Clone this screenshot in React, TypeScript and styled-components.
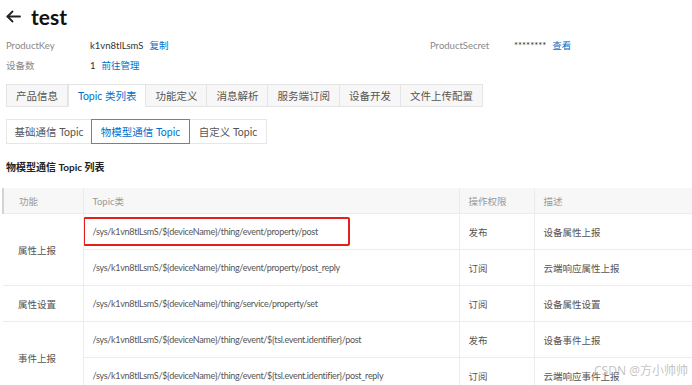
import styled, { createGlobalStyle } from "styled-components";

const Global = createGlobalStyle`
  html, body {
    margin: 0;
    padding: 0;
    background: #ffffff;
    overflow: hidden;
  }
  body {
    font-family: Lato, "Noto Sans CJK SC", sans-serif;
    color: #333;
  }
`

const Page = styled.div`
  position: relative;
  width: 692px;
  height: 385px;
  overflow: hidden;
  padding-left: 6px;
  box-sizing: border-box;
`

const Header = styled.div`
  display: flex;
  align-items: center;
  gap: 10px;
  height: 32px;
  svg {
    display: block;
    margin-top: 1px;
  }
  .name {
    font-size: 21px;
    font-weight: 700;
    color: #111;
  }
`

const Info = styled.div`
  display: grid;
  grid-template-columns: 84px 340px 84px auto;
  row-gap: 6px;
  margin-top: 7px;
  font-size: 9.5px;
  line-height: 14px;
  .lbl {
    color: #888;
  }
  .val {
    color: #333;
  }
  a {
    color: #0070cc;
    margin-left: 6px;
    text-decoration: none;
  }
`

const TabBar = styled.div`
  display: flex;
  margin-top: 11px;
  height: 23px;
`

const Tab = styled.div<{ $active?: boolean }>`
  display: flex;
  align-items: center;
  padding: 0 9px;
  font-size: 10.5px;
  color: ${p => (p.$active ? "#0070cc" : "#555")};
  background: ${p => (p.$active ? "#fff" : "#f7f7f7")};
  border: 1px solid #e4e4e4;
  border-left: ${p => (p.$active ? "1px solid #e4e4e4" : "none")};
  border-bottom: ${p => (p.$active ? "1px solid #fff" : "1px solid #e4e4e4")};
  &:first-child {
    border-left: 1px solid #e4e4e4;
  }
`

const SubBar = styled.div`
  display: flex;
  margin-top: 12px;
  height: 25px;
`

const SubTab = styled.div<{ $active?: boolean; $w: number }>`
  display: flex;
  align-items: center;
  justify-content: center;
  width: ${p => p.$w}px;
  box-sizing: border-box;
  font-size: 10.5px;
  color: ${p => (p.$active ? "#0070cc" : "#555")};
  background: #fff;
  border: 1px solid ${p => (p.$active ? "#3d8fd8" : "#e6e6e6")};
  margin-left: -1px;
  position: relative;
  z-index: ${p => (p.$active ? 1 : 0)};
  &:first-child {
    margin-left: 0;
  }
`

const Title = styled.div`
  margin-top: 16px;
  font-size: 10px;
  font-weight: 700;
  color: #222;
  line-height: 14px;
`

const Table = styled.table`
  margin-top: 14px;
  margin-left: -4px;
  width: 730px;
  border-collapse: collapse;
  table-layout: fixed;
  font-size: 9.5px;
  color: #555;
  th {
    background: #f7f7f7;
    color: #999;
    font-weight: 400;
    text-align: left;
    height: 25px;
    padding: 0 9px;
    border-bottom: 1px solid #ececec;
    border-right: 1px solid #ececec;
  }
  th:first-child {
    border-left: 2px solid #d4d4d4;
  }
  td {
    height: 35px;
    padding: 0 9px;
    border-bottom: 1px solid #ececec;
    border-right: 1px solid #ececec;
    white-space: nowrap;
  }
  td.topic {
    font-size: 9px;
    letter-spacing: -0.3px;
  }
  th:first-child, td.fn {
    padding-left: 15px;
  }
`

const Mark = styled.div`
  border: 2px solid #e3201b;
  border-radius: 2px;
  width: 267px;
  height: 29px;
  box-sizing: border-box;
  margin-left: -10px;
  padding-left: 8px;
  display: flex;
  align-items: center;
`

const Watermark = styled.div`
  position: absolute;
  right: 4px;
  bottom: 6px;
  font-size: 12px;
  color: rgba(170, 170, 170, 0.7);
  font-family: "Noto Sans", "Noto Sans CJK SC", sans-serif;
`

const rows = [
  { fn: "属性上报", span: 2, topic: "/sys/k1vn8tlLsmS/${deviceName}/thing/event/property/post", op: "发布", desc: "设备属性上报", mark: true },
  { fn: "", span: 0, topic: "/sys/k1vn8tlLsmS/${deviceName}/thing/event/property/post_reply", op: "订阅", desc: "云端响应属性上报" },
  { fn: "属性设置", span: 1, topic: "/sys/k1vn8tlLsmS/${deviceName}/thing/service/property/set", op: "订阅", desc: "设备属性设置" },
  { fn: "事件上报", span: 2, topic: "/sys/k1vn8tlLsmS/${deviceName}/thing/event/${tsl.event.identifier}/post", op: "发布", desc: "设备事件上报" },
  { fn: "", span: 0, topic: "/sys/k1vn8tlLsmS/${deviceName}/thing/event/${tsl.event.identifier}/post_reply", op: "订阅", desc: "云端响应事件上报" },
]

const tabs = ["产品信息", "Topic 类列表", "功能定义", "消息解析", "服务端订阅", "设备开发", "文件上传配置"]
const subTabs = [
  { t: "基础通信 Topic", w: 86 },
  { t: "物模型通信 Topic", w: 99 },
  { t: "自定义 Topic", w: 78 },
]

export default function App() {
  return <Page>
    <Global />
    <Header>
      <svg width="15" height="13" viewBox="0 0 15 13" fill="none" stroke="#222" strokeWidth="1.8" strokeLinecap="round" strokeLinejoin="round">
        <path d="M14 6.5H1.5" />
        <path d="M6.5 1.5L1.5 6.5L6.5 11.5" />
      </svg>
      <span className="name">test</span>
    </Header>
    <Info>
      <span className="lbl">ProductKey</span>
      <span className="val">k1vn8tlLsmS<a>复制</a></span>
      <span className="lbl">ProductSecret</span>
      <span className="val">********<a>查看</a></span>
      <span className="lbl">设备数</span>
      <span className="val">1<a>前往管理</a></span>
    </Info>
    <TabBar>
      {tabs.map((t, i) => <Tab key={t} $active={i === 1}>{t}</Tab>)}
    </TabBar>
    <SubBar>
      {subTabs.map((s, i) => <SubTab key={s.t} $w={s.w} $active={i === 1}>{s.t}</SubTab>)}
    </SubBar>
    <Title>物模型通信 Topic 列表</Title>
    <Table>
      <colgroup>
        <col style={{ width: 80 }} />
        <col style={{ width: 376 }} />
        <col style={{ width: 75 }} />
        <col />
      </colgroup>
      <thead>
        <tr>
          <th>功能</th>
          <th>Topic类</th>
          <th>操作权限</th>
          <th>描述</th>
        </tr>
      </thead>
      <tbody>
        {rows.map((r, i) => (
          <tr key={i}>
            {r.span > 0 && <td className="fn" rowSpan={r.span}>{r.fn}</td>}
            <td className="topic">{r.mark ? <Mark>{r.topic}</Mark> : r.topic}</td>
            <td>{r.op}</td>
            <td>{r.desc}</td>
          </tr>
        ))}
      </tbody>
    </Table>
    <Watermark>CSDN @方小帅帅</Watermark>
  </Page>
}
